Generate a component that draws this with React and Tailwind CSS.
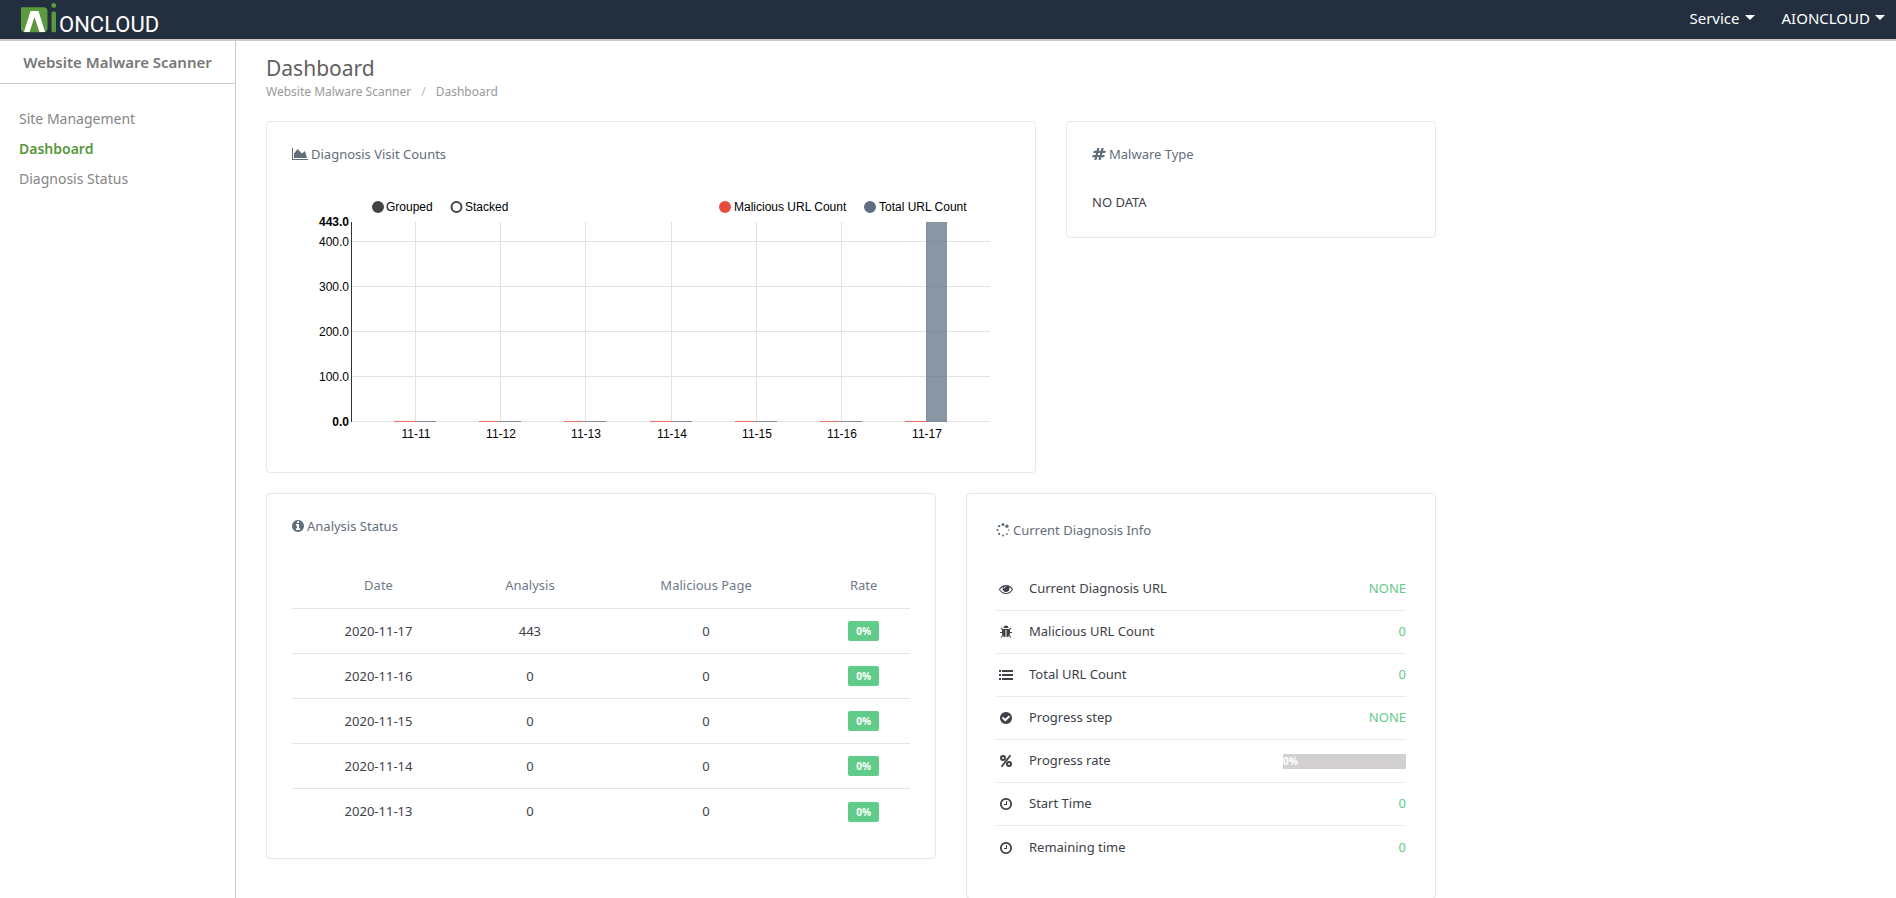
import { useState } from 'react'
import clsx from 'clsx'

const ICONS = {
  area: {
    box: '0 0 2048 1792',
    path: 'M2048 1536v128h-2048v-1536h128v1408h1920zm-384-1024l256 896h-1664v-576l448-576 576 576z',
  },
  hashtag: {
    box: '0 0 1792 1792',
    path: 'M991 1024l64-256h-254l-64 256h254zm768-504l-56 224q-7 24-31 24h-327l-64 256h311q15 0 25 12 10 14 6 28l-56 224q-5 24-31 24h-327l-81 328q-7 24-31 24h-224q-16 0-26-12-9-12-6-28l78-312h-254l-81 328q-7 24-31 24h-225q-15 0-25-12-9-12-6-28l78-312h-311q-15 0-25-12-9-12-6-28l56-224q7-24 31-24h327l64-256h-311q-15 0-25-12-10-14-6-28l56-224q5-24 31-24h327l81-328q7-24 32-24h224q15 0 25 12 9 12 6 28l-78 312h254l81-328q7-24 32-24h224q15 0 25 12 9 12 6 28l-78 312h311q15 0 25 12 9 12 6 28z',
  },
  info: {
    box: '128 0 1536 1792',
    path: 'M1152 1376v-160q0-14-9-23t-23-9h-96v-512q0-14-9-23t-23-9h-320q-14 0-23 9t-9 23v160q0 14 9 23t23 9h96v320h-96q-14 0-23 9t-9 23v160q0 14 9 23t23 9h448q14 0 23-9t9-23zm-128-896v-160q0-14-9-23t-23-9h-192q-14 0-23 9t-9 23v160q0 14 9 23t23 9h192q14 0 23-9t9-23zm640 416q0 209-103 385.5t-279.5 279.5-385.5 103-385.5-103-279.5-279.5-103-385.5 103-385.5 279.5-279.5 385.5-103 385.5 103 279.5 279.5 103 385.5z',
  },
  eye: {
    box: '0 0 1792 1792',
    path: 'M1664 960q-152-236-381-353 61 104 61 225 0 185-131.5 316.5t-316.5 131.5-316.5-131.5-131.5-316.5q0-121 61-225-229 117-381 353 133 205 333.5 326.5t434.5 121.5 434.5-121.5 333.5-326.5zm-720-384q0-20-14-34t-34-14q-125 0-214.5 89.5t-89.5 214.5q0 20 14 34t34 14 34-14 14-34q0-86 61-147t147-61q20 0 34-14t14-34zm848 384q0 34-20 69-140 230-376.5 368.5t-499.5 138.5-499.5-139-376.5-368q-20-35-20-69t20-69q140-229 376.5-368t499.5-139 499.5 139 376.5 368q20 35 20 69z',
  },
  bug: {
    box: '0 0 1792 1792',
    path: 'M1696 960q0 26-19 45t-45 19h-224q0 171-67 290l208 209q19 19 19 45t-19 45q-18 19-45 19t-45-19l-198-197q-5 5-15 13t-42 28.5-65 36.5-82 29-97 13v-896h-128v896q-51 0-101.5-13.5t-87-33-66-39-43.5-32.5l-15-14-183 207q-20 21-48 21-24 0-43-16-19-18-20.5-44.5t15.5-46.5l202-227q-58-114-58-274h-224q-26 0-45-19t-19-45 19-45 45-19h224v-294l-173-173q-19-19-19-45t19-45 45-19 45 19l173 173h844l173-173q19-19 45-19t45 19 19 45-19 45l-173 173v294h224q26 0 45 19t19 45zm-480-576h-640q0-133 93.5-226.5t226.5-93.5 226.5 93.5 93.5 226.5z',
  },
  list: {
    box: '0 0 1792 1792',
    path: 'M0 256h256v256H0zM384 256h1408v256H384zM0 768h256v256H0zM384 768h1408v256H384zM0 1280h256v256H0zM384 1280h1408v256H384z',
  },
  check: {
    box: '0 0 1792 1792',
    path: 'M1412 734q0-28-18-46l-91-90q-19-19-45-19t-45 19l-408 407-226-226q-19-19-45-19t-45 19l-91 90q-18 18-18 46 0 27 18 45l362 362q19 19 45 19 27 0 46-19l543-543q18-18 18-45zm252 162q0 209-103 385.5t-279.5 279.5-385.5 103-385.5-103-279.5-279.5-103-385.5 103-385.5 279.5-279.5 385.5-103 385.5 103 279.5 279.5 103 385.5z',
  },
  clock: {
    box: '0 0 1792 1792',
    path: 'M1024 544v448q0 14-9 23t-23 9h-320q-14 0-23-9t-9-23v-64q0-14 9-23t23-9h224v-352q0-14 9-23t23-9h64q14 0 23 9t9 23zm416 352q0-148-73-273t-198-198-273-73-273 73-198 198-73 273 73 273 198 198 273 73 273-73 198-198 73-273zm224 0q0 209-103 385.5t-279.5 279.5-385.5 103-385.5-103-279.5-279.5-103-385.5 103-385.5 279.5-279.5 385.5-103 385.5 103 279.5 279.5 103 385.5z',
  },
}

const menu = ['Site Management', 'Dashboard', 'Diagnosis Status']

const analysis = [
  { date: '2020-11-17', count: 443, malicious: 0, rate: '0%' },
  { date: '2020-11-16', count: 0, malicious: 0, rate: '0%' },
  { date: '2020-11-15', count: 0, malicious: 0, rate: '0%' },
  { date: '2020-11-14', count: 0, malicious: 0, rate: '0%' },
  { date: '2020-11-13', count: 0, malicious: 0, rate: '0%' },
]

const diagnosis = [
  { icon: 'eye', label: 'Current Diagnosis URL', value: 'NONE' },
  { icon: 'bug', label: 'Malicious URL Count', value: '0' },
  { icon: 'list', label: 'Total URL Count', value: '0' },
  { icon: 'check', label: 'Progress step', value: 'NONE' },
  { icon: 'percent', label: 'Progress rate', progress: '0%' },
  { icon: 'clock', label: 'Start Time', value: '0' },
  { icon: 'clock', label: 'Remaining time', value: '0' },
]

function Icon({ name, className }) {
  if (name === 'percent') {
    return (
      <svg viewBox="0 0 14 14" className={className} fill="none" stroke="currentColor" strokeWidth="2" aria-hidden="true">
        <circle cx="4" cy="4" r="2" />
        <circle cx="10" cy="10" r="2" />
        <path d="M11.5 1.2L2.5 12.8" strokeWidth="1.8" />
      </svg>
    )
  }
  if (name === 'spinner') {
    return (
      <svg viewBox="0 0 14 14" className={className} fill="currentColor" aria-hidden="true">
        <circle cx="7" cy="1.6" r="1.5" />
        <circle cx="10.9" cy="3.2" r="1.7" />
        <circle cx="12.6" cy="7" r="0.8" />
        <circle cx="10.9" cy="10.9" r="0.9" />
        <circle cx="7" cy="12.6" r="1" />
        <circle cx="3.1" cy="10.9" r="1.1" />
        <circle cx="1.5" cy="7" r="1.1" />
        <circle cx="3.1" cy="3.1" r="1.2" />
      </svg>
    )
  }
  return (
    <svg viewBox={ICONS[name].box} className={className} fill="currentColor" aria-hidden="true">
      <path d={ICONS[name].path} />
    </svg>
  )
}

function Logo() {
  return (
    <svg viewBox="0 0 140 37" className="h-[37px] w-[140px]" role="img" aria-label="AIONCLOUD">
      <path d="M0 6.3h22.500q4 0 4 4v17q0 4-4 4H4q-4 0-4-4z" fill="#5b9a3f" />
      <path d="M3 31L9.500 10h8L24 31h-5.500L13.500 16 8.500 31z" fill="#fff" />
      <circle cx="32.800" cy="4.500" r="2.400" fill="#5b9a3f" />
      <rect x="30.500" y="10.500" width="4.500" height="20.800" rx="1.500" fill="#5b9a3f" />
      <text x="38" y="31" fill="#fff" fontFamily="Roboto, sans-serif" fontSize="22" fontWeight="400">ONCLOUD</text>
    </svg>
  )
}

function NavButton({ children }) {
  return (
    <button type="button" className="flex items-center gap-[5px] text-[15px] leading-5 text-white">
      {children}
      <span className="border-x-5 border-t-5 border-x-transparent border-t-white" />
    </button>
  )
}

function Card({ icon, title, iconClass = 'size-[14px]', className, children }) {
  return (
    <section className={clsx('rounded border border-[#e7e7e7] bg-white', className)}>
      <h4 className="flex items-center gap-[3px] text-[13px] leading-4 text-[#636e7b]">
        <Icon name={icon} className={iconClass} />
        {title}
      </h4>
      {children}
    </section>
  )
}

const days = ['11-11', '11-12', '11-13', '11-14', '11-15', '11-16', '11-17']
const totals = [0, 0, 0, 0, 0, 0, 443]
const ticks = [0, 100, 200, 300, 400, 443]

function VisitChart() {
  const left = 60
  const right = 699
  const base = 230
  const step = 85.2
  const y = v => Math.ceil(base - (v / 443) * 200)

  return (
    <svg viewBox="1 0 718 256" className="mt-[30px] block w-full font-['Liberation_Sans',Arial,sans-serif] text-xs" role="img" aria-label="Diagnosis visit counts">
      <g strokeWidth="2">
        <circle cx="87" cy="15" r="5" fill="#444" stroke="#444" />
        <circle cx="165.500" cy="15" r="5" fill="#fff" stroke="#444" />
        <circle cx="434" cy="15" r="5" fill="#e74c3c" stroke="#e74c3c" />
        <circle cx="579" cy="15" r="5" fill="#5f6f81" stroke="#5f6f81" />
      </g>
      <text x="95" y="19">Grouped</text>
      <text x="174" y="19">Stacked</text>
      <text x="443" y="19">Malicious URL Count</text>
      <text x="588" y="19">Total URL Count</text>

      {ticks.map(t => (
        <g key={t}>
          {t !== 443 && <line x1={left} x2={right} y1={y(t) - 0.5} y2={y(t) - 0.5} stroke="#e2e2e2" />}
          <text x="58" y={y(t) + 4} textAnchor="end" fontWeight={t === 0 || t === 443 ? 700 : 400}>{t.toFixed(1)}</text>
        </g>
      ))}
      {days.map((d, i) => {
        const x = Math.round(124 + i * step)
        const top = Math.min(y(totals[i]), base - 1)
        return (
          <g key={d}>
            <line x1={x + 0.5} x2={x + 0.5} y1="30" y2={base} stroke="#e2e2e2" />
            <rect x={x - 21} y={base - 1} width="21" height="1" fill="#ea7264" />
            <rect x={x} y={top} width="21" height={base - top} fill="#5f6f81" fillOpacity="0.73" />
            <text x={x + 1} y="246" textAnchor="middle">{d}</text>
          </g>
        )
      })}
      <line x1="60.500" x2="60.500" y1="30" y2={base} stroke="#333" />
    </svg>
  )
}

function AnalysisTable() {
  return (
    <table className="mt-[29px] w-full table-fixed text-center text-[13px] leading-5">
      <thead>
        <tr className="h-[45px] text-[#6c7a89]">
          <th className="w-[28%] font-normal">Date</th>
          <th className="w-[21%] font-normal">Analysis</th>
          <th className="w-[36%] font-normal">Malicious Page</th>
          <th className="w-[15%] font-normal">Rate</th>
        </tr>
      </thead>
      <tbody>
        {analysis.map(row => (
          <tr key={row.date} className="h-[45px] border-t border-[#e4e5e9]">
            <td>{row.date}</td>
            <td>{row.count}</td>
            <td>{row.malicious}</td>
            <td>
              <span className="inline-block rounded-[2px] bg-[#61cb89] px-2 align-middle text-[10px] font-bold text-white">{row.rate}</span>
            </td>
          </tr>
        ))}
      </tbody>
    </table>
  )
}

export default function App() {
  const [active, setActive] = useState('Dashboard')

  return (
    <div className="flex min-h-screen flex-col bg-white font-['Noto_Sans','Open_Sans',sans-serif] text-[13px] text-[#3d4148]">
      <header className="flex h-[41px] items-center justify-between border-b-2 border-[#cfcbcc] bg-[#232f3f] pr-[11px] pl-[21px]">
        <a href="#home"><Logo /></a>
        <nav className="flex gap-[27px] pb-1">
          <NavButton>Service</NavButton>
          <NavButton>AIONCLOUD</NavButton>
        </nav>
      </header>

      <div className="flex flex-1">
        <aside className="w-[236px] shrink-0 border-r border-[#c9c9c9]">
          <h2 className="border-b border-[#c9c9c9] pt-[11px] pb-[11px] text-center text-[15px] leading-5 font-semibold text-[#777]">Website Malware Scanner</h2>
          <ul className="pt-5 pl-[19px] text-sm leading-[30px]">
            {menu.map(item => (
              <li key={item}>
                <a
                  href={`#${item}`}
                  onClick={() => setActive(item)}
                  className={item === active ? 'font-semibold text-[#56993b]' : 'text-[#858585]'}
                >
                  {item}
                </a>
              </li>
            ))}
          </ul>
        </aside>

        <main className="max-w-[1230px] flex-1 px-[30px] pt-[13px]">
          <h1 className="text-[21px] leading-7 text-[#5f5f5f]">Dashboard</h1>
          <nav className="mb-[19px] flex gap-[10px] text-xs leading-5 text-[#999]">
            <a href="#scanner">Website Malware Scanner</a>
            <span className="text-[#bbb]">/</span>
            <span>Dashboard</span>
          </nav>

          <div className="grid grid-cols-12 items-start gap-x-[30px] gap-y-5">
            <Card icon="area" title="Diagnosis Visit Counts" iconClass="h-[14px] w-4" className="col-span-8 px-[25px] py-6">
              <VisitChart />
            </Card>
            <Card icon="hashtag" title="Malware Type" className="col-span-4 px-[25px] py-6">
              <p className="mt-[30px] leading-[21px]">NO DATA</p>
            </Card>
            <Card icon="info" title="Analysis Status" iconClass="h-[14px] w-3" className="col-span-7 px-[25px] pt-6 pb-[25px]">
              <AnalysisTable />
            </Card>
            <Card icon="spinner" title="Current Diagnosis Info" className="col-span-5 px-[29px] pt-7 pb-[29px]">
              <ul className="mt-[30px]">
                {diagnosis.map(row => (
                  <li key={row.label} className="flex h-[43px] items-center border-b border-[#ebebeb] last:border-b-0">
                    <span className="flex w-[33px] pl-[3px]">
                      <Icon name={row.icon} className="size-[14px]" />
                    </span>
                    <span>{row.label}</span>
                    {row.progress ? (
                      <div className="ml-auto h-[15px] w-[30%] bg-[#d3d0d1] text-[10px] leading-[15px] font-bold text-white">{row.progress}</div>
                    ) : (
                      <span className="ml-auto text-[#61cb89]">{row.value}</span>
                    )}
                  </li>
                ))}
              </ul>
            </Card>
          </div>
        </main>
      </div>
    </div>
  )
}
